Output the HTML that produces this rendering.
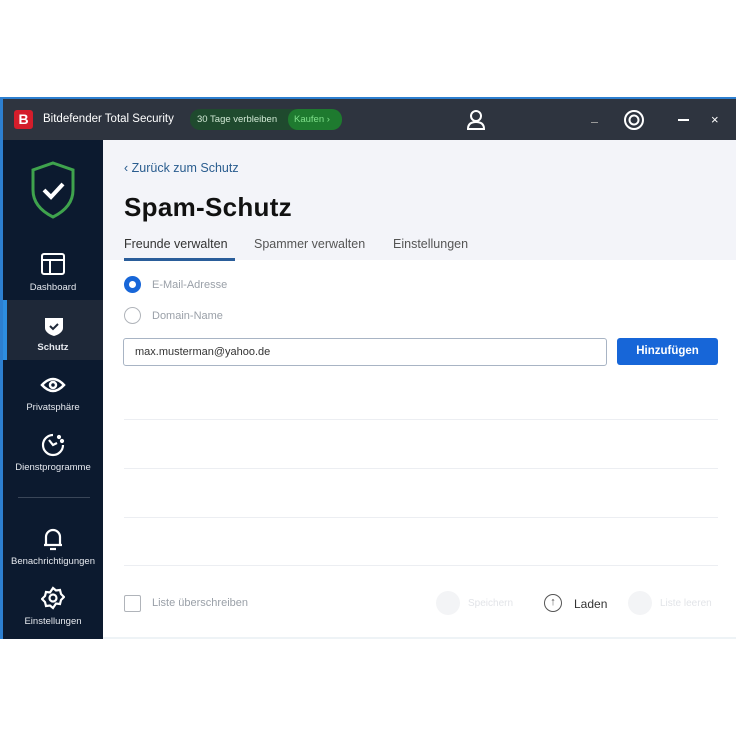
<!DOCTYPE html>
<html><head><meta charset="utf-8"><style>
*{margin:0;padding:0;box-sizing:border-box}
body{width:736px;height:736px;background:#fff;font-family:"Liberation Sans",sans-serif;position:relative;overflow:hidden}
.abs{position:absolute}
.win{left:0;top:97px;width:736px;height:542px;border-top:2px solid #2d7fd0;border-left:3px solid #2d7fd0}
.tb{left:3px;top:99px;width:733px;height:41px;background:#2e343f}
.side{left:3px;top:140px;width:100px;height:499px;background:#0c1a2f}
.hdr{left:103px;top:140px;width:633px;height:120px;background:#f3f4f9}
.t{color:#fff;font-size:11px}
.nav{width:100px;text-align:center;color:#e6e9ef;font-size:9.5px}
.line{left:124px;width:594px;height:1px;background:#eceef2}
.g{color:#9aa0a8;font-size:11px}
</style></head><body>
<div class="abs win"></div>
<div class="abs tb"></div>
<div class="abs" style="left:14px;top:110px;width:19px;height:19px;background:#d41d2b;border-radius:3px;color:#fff;font-weight:bold;font-size:14px;text-align:center;line-height:19px">B</div>
<div class="abs t" style="left:43px;top:113px;font-size:11.5px">Bitdefender Total Security</div>
<div class="abs" style="left:190px;top:109px;width:152px;height:21px;border-radius:10px;background:#1f4a2e"></div>
<div class="abs" style="left:288px;top:109px;width:54px;height:21px;border-radius:10px;background:#1e7a2f"></div>
<div class="abs t" style="left:197px;top:114px;font-size:9.5px;color:#d0e8d4">30 Tage verbleiben</div>
<div class="abs t" style="left:294px;top:114px;font-size:9.5px;color:#7fe08b">Kaufen ›</div>
<svg class="abs" style="left:466px;top:109px" width="20" height="22" viewBox="0 0 20 22" fill="none" stroke="#fff" stroke-width="2"><circle cx="10" cy="7" r="5"/><path d="M2 20q0-7 8-7t8 7z"/></svg>
<div class="abs" style="left:591px;top:122px;width:7px;height:1px;background:#999"></div>
<svg class="abs" style="left:623px;top:109px" width="22" height="22" viewBox="0 0 22 22" fill="none" stroke="#fff" stroke-width="2"><circle cx="11" cy="11" r="9"/><circle cx="11" cy="11" r="4.5"/></svg>
<div class="abs" style="left:678px;top:119px;width:11px;height:2px;background:#fff"></div>
<div class="abs t" style="left:711px;top:112px;font-size:13px">×</div>

<div class="abs side"></div>
<svg class="abs" style="left:29px;top:160px" width="48" height="60" viewBox="0 0 48 60" fill="none"><path d="M24 3L44 10v20c0 14-10 22-20 27C14 52 4 44 4 30V10z" stroke="#3fa34d" stroke-width="3"/><path d="M15 30l7 7 12-13" stroke="#fff" stroke-width="4"/></svg>
<svg class="abs" style="left:40px;top:252px" width="26" height="24" viewBox="0 0 26 24" fill="none" stroke="#fff" stroke-width="2"><rect x="2" y="2" width="22" height="20" rx="2"/><path d="M2 8h22M10 8v14"/></svg>
<div class="abs nav" style="left:3px;top:282px">Dashboard</div>
<div class="abs" style="left:3px;top:300px;width:100px;height:60px;background:#1e2838"></div>
<div class="abs" style="left:3px;top:300px;width:4px;height:60px;background:#2d8de0"></div>
<svg class="abs" style="left:44px;top:316px" width="20" height="21" viewBox="0 0 20 21"><path d="M1 2h18v10c0 4-5 7-9 8-4-1-9-4-9-8z" fill="#fff"/><path d="M6 10l3 3 5-5" stroke="#1e2838" stroke-width="2" fill="none"/></svg>
<div class="abs nav" style="left:3px;top:342px;font-weight:bold">Schutz</div>
<svg class="abs" style="left:40px;top:376px" width="26" height="18" viewBox="0 0 26 18" fill="none" stroke="#fff" stroke-width="2.5"><path d="M2 9q11-12 22 0q-11 12-22 0z"/><circle cx="13" cy="9" r="3"/></svg>
<div class="abs nav" style="left:3px;top:402px">Privatsphäre</div>
<svg class="abs" style="left:40px;top:432px" width="26" height="26" viewBox="0 0 26 26" fill="none" stroke="#fff" stroke-width="2.2"><path d="M13 3a10 10 0 1 0 10 10M9 8l4 5 4-2"/><circle cx="19" cy="5" r="1" fill="#fff"/><circle cx="22" cy="9" r="1" fill="#fff"/></svg>
<div class="abs nav" style="left:3px;top:462px">Dienstprogramme</div>
<div class="abs" style="left:18px;top:497px;width:72px;height:1px;background:#3a4658"></div>
<svg class="abs" style="left:42px;top:526px" width="22" height="26" viewBox="0 0 22 26" fill="none" stroke="#fff" stroke-width="2.2"><path d="M4 19V11a7 7 0 0 1 14 0v8H2h18M8 23h6"/></svg>
<div class="abs nav" style="left:1px;top:556px;width:104px">Benachrichtigungen</div>
<svg class="abs" style="left:41px;top:586px" width="24" height="24" viewBox="0 0 24 24" fill="none" stroke="#fff" stroke-width="2.2"><path d="M12 2l3 2.5 4-.5 1 4 3 3-3 3-1 4-4-.5L12 22l-3-2.5-4 .5-1-4-3-3 3-3 1-4 4 .5z"/><circle cx="12" cy="12" r="3.5"/></svg>
<div class="abs nav" style="left:3px;top:616px">Einstellungen</div>

<div class="abs hdr"></div>
<div class="abs" style="left:124px;top:161px;color:#2a5d8f;font-size:12.5px">‹ Zurück zum Schutz</div>
<div class="abs" style="left:124px;top:192px;color:#111;font-size:26px;font-weight:bold;letter-spacing:0.3px">Spam-Schutz</div>
<div class="abs" style="left:124px;top:237px;color:#333;font-size:12.5px">Freunde verwalten</div>
<div class="abs" style="left:124px;top:258px;width:111px;height:3px;background:#2a5d9a"></div>
<div class="abs" style="left:254px;top:237px;color:#555;font-size:12.5px">Spammer verwalten</div>
<div class="abs" style="left:393px;top:237px;color:#555;font-size:12.5px">Einstellungen</div>

<div class="abs" style="left:124px;top:276px;width:17px;height:17px;border-radius:50%;border:5px solid #1766d8;background:#fff"></div>
<div class="abs g" style="left:152px;top:279px">E-Mail-Adresse</div>
<div class="abs" style="left:124px;top:307px;width:17px;height:17px;border-radius:50%;border:1.5px solid #b0b4ba"></div>
<div class="abs g" style="left:152px;top:310px">Domain-Name</div>
<div class="abs" style="left:123px;top:338px;width:484px;height:28px;border:1.5px solid #a8b4c4;border-radius:3px;background:#fff"></div>
<div class="abs" style="left:135px;top:346px;color:#333;font-size:11px">max.musterman@yahoo.de</div>
<div class="abs" style="left:617px;top:338px;width:101px;height:27px;background:#1766d8;border-radius:3px;color:#fff;font-size:11.5px;font-weight:bold;text-align:center;line-height:27px">Hinzufügen</div>
<div class="abs line" style="top:419px"></div>
<div class="abs line" style="top:468px"></div>
<div class="abs line" style="top:517px"></div>
<div class="abs line" style="top:565px"></div>
<div class="abs" style="left:124px;top:595px;width:17px;height:17px;border:1.5px solid #b0b4ba;border-radius:2px"></div>
<div class="abs g" style="left:152px;top:597px">Liste überschreiben</div>
<div class="abs" style="left:436px;top:591px;width:24px;height:24px;border-radius:50%;background:#f3f4f6"></div>
<div class="abs" style="left:468px;top:598px;color:#e2e4e8;font-size:10px">Speichern</div>
<div class="abs" style="left:544px;top:594px;width:18px;height:18px;border-radius:50%;border:1.5px solid #555;color:#555;font-size:11px;text-align:center;line-height:15px">↑</div>
<div class="abs" style="left:574px;top:597px;color:#333;font-size:12px">Laden</div>
<div class="abs" style="left:628px;top:591px;width:24px;height:24px;border-radius:50%;background:#f3f4f6"></div>
<div class="abs" style="left:660px;top:598px;color:#e2e4e8;font-size:10px">Liste leeren</div>
<div class="abs" style="left:103px;top:637px;width:633px;height:2px;background:#eef3f6"></div>
</body></html>
